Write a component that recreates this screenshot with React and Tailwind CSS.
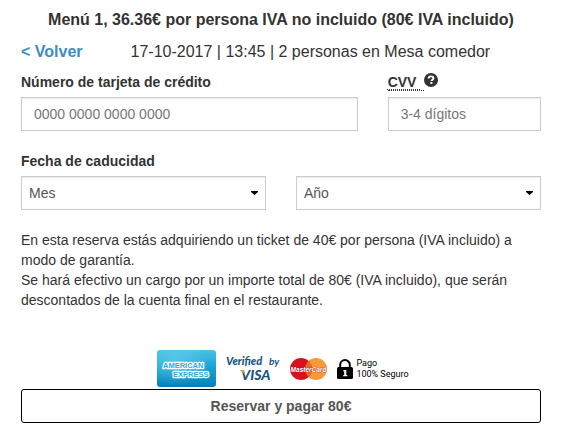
import React from 'react';

const fieldClass =
  'block h-[34px] w-full rounded-none border border-[#cccccc] bg-white text-sm text-[#555555] shadow-[inset_0_1px_1px_rgba(0,0,0,0.075)] outline-none focus:border-[#66afe9]';

function Caret() {
  return (
    <svg
      className="pointer-events-none absolute right-2 top-[15px] h-1 w-[7px]"
      viewBox="0 0 7 4"
      aria-hidden="true"
    >
      <path d="M0 0h7v1L3.5 4L0 1z" fill="#000" />
    </svg>
  );
}

function SelectField({ id, placeholder, options, label }) {
  return (
    <div className="relative">
      <select id={id} aria-label={label} defaultValue="" className={`${fieldClass} appearance-none pl-[7px] pr-6`}>
        <option value="">{placeholder}</option>
        {options.map((option) => (
          <option key={option} value={option}>
            {option}
          </option>
        ))}
      </select>
      <Caret />
    </div>
  );
}

function HelpIcon() {
  return (
    <svg className="h-[14px] w-[14px]" viewBox="0 0 14 14" aria-hidden="true">
      <circle cx="7" cy="7" r="7" fill="#333" />
      <path
        d="M4.6 5.600C4.600 4 5.600 3.400 7.100 3.400s2.300.7 2.300 1.800c0 1.400-1.900 1.500-1.900 2.900"
        fill="none"
        stroke="#fff"
        strokeWidth="1.9"
      />
      <path d="M6.400 9h2v1.900h-2z" fill="#fff" />
    </svg>
  );
}

function AmexLogo() {
  return (
    <svg className="h-[38px] w-[59px]" viewBox="0 0 59 38" role="img" aria-label="American Express">
      <defs>
        <linearGradient id="amex" x1="0" y1="0" x2="0" y2="1">
          <stop offset="0" stopColor="#4cc0e3" />
          <stop offset="0.45" stopColor="#19a5d6" />
          <stop offset="1" stopColor="#0780b9" />
        </linearGradient>
        <radialGradient id="amexGlow" cx="0.3" cy="0.35" r="0.6">
          <stop offset="0" stopColor="#7ee0f2" stopOpacity="0.5" />
          <stop offset="1" stopColor="#7ee0f2" stopOpacity="0" />
        </radialGradient>
      </defs>
      <rect width="59" height="37" rx="3" fill="url(#amex)" />
      <rect width="59" height="37" rx="3" fill="url(#amexGlow)" />
      <g
        fontFamily="'Liberation Sans', Arial, sans-serif"
        fontWeight="700"
        fontSize="7.500"
        fill="#2fa9d6"
        stroke="#fff"
        strokeWidth="2.400"
        strokeLinejoin="round"
        paintOrder="stroke"
      >
        <text x="6" y="17.500">AMERICAN</text>
        <text x="16" y="26.500">EXPRESS</text>
      </g>
    </svg>
  );
}

function VerifiedByVisaLogo() {
  return (
    <svg className="h-[30px] w-[54px]" viewBox="0 0 54 30" role="img" aria-label="Verified by Visa">
      <g fill="#175582" fontStyle="italic" fontWeight="900" fontFamily="Lato, sans-serif">
        <text x="0" y="11" fontSize="11">
          Verified
        </text>
        <text x="43" y="11" fontSize="10" fontWeight="700">
          by
        </text>
        <text x="15" y="26" fontSize="14">
          VISA
        </text>
      </g>
      <path d="M13.500 16h4l2 6c-1.500-3-3-4.500-6-6z" fill="#f39a2d" />
    </svg>
  );
}

function MasterCardLogo() {
  return (
    <svg className="h-[22px] w-[37px]" viewBox="0 0 37 22" role="img" aria-label="MasterCard">
      <circle cx="26" cy="11" r="11" fill="#f8993a" />
      <circle cx="11" cy="11" r="11" fill="#d5121e" />
      <path d="M18.500 3a11 11 0 0 1 0 16a11 11 0 0 1 0-16z" fill="#e76a2a" />
      <text
        x="18.500"
        y="13.500"
        textAnchor="middle"
        fontFamily="'Liberation Sans', Arial, sans-serif"
        fontSize="6.500"
        fontStyle="italic"
        fontWeight="700"
        fill="#fff"
        stroke="#a51626"
        strokeWidth="0.6"
        paintOrder="stroke"
      >
        MasterCard
      </text>
    </svg>
  );
}

function LockIcon() {
  return (
    <svg className="h-[20px] w-4" viewBox="0 0 16 20" aria-hidden="true">
      <path d="M3.200 10V5.700a4.800 4.600 0 0 1 9.600 0V10" fill="none" stroke="#000" strokeWidth="2" />
      <rect y="8" width="16" height="12" rx="1.500" fill="#000" />
      <path d="M6.500 11h2.800v5h1v1.200H6.200V16h1v-3.500h-.9z" fill="#fff" />
    </svg>
  );
}

const months = ['01', '02', '03', '04', '05', '06', '07', '08', '09', '10', '11', '12'];
const years = ['2017', '2018', '2019', '2020', '2021', '2022', '2023', '2024'];

export default function App() {
  return (
    <main className="bg-white pb-6 pl-[21px] pr-[42px] pt-2 font-['Helvetica_Neue','Liberation_Sans',Arial,sans-serif] text-sm leading-5 text-[#333333]">
      <h1 className="text-center text-base font-bold">Menú 1, 36.36€ por persona IVA no incluido (80€ IVA incluido)</h1>

      <div className="mt-2 flex items-center gap-12 text-base">
        <a href="#volver" className="font-bold text-[#3c8dc5]">
          &lt; Volver
        </a>
        <p>17-10-2017 | 13:45 | 2 personas en Mesa comedor</p>
      </div>

      <form onSubmit={(event) => event.preventDefault()}>
        <div className="-mx-[15px] mt-2 flex">
          <div className="w-2/3 px-[15px]">
            <label htmlFor="card" className="mb-[5px] block font-bold">
              Número de tarjeta de crédito
            </label>
            <input
              id="card"
              type="text"
              inputMode="numeric"
              placeholder="0000 0000 0000 0000"
              className={`${fieldClass} px-3 placeholder:text-[#777777]`}
            />
          </div>
          <div className="w-1/3 px-[15px]">
            <div className="mb-[5px] flex h-5 items-center">
              <label htmlFor="cvv" className="font-bold">
                <abbr
                  title="Código de seguridad de la tarjeta"
                  className="block h-[18px] cursor-help whitespace-pre border-b border-dotted border-[#333333] pr-1 leading-[18px] underline decoration-dotted decoration-1 underline-offset-2"
                >
                  {'CVV '}
                </abbr>
              </label>
              <div className="h-[18px]">
                <HelpIcon />
              </div>
            </div>
            <input
              id="cvv"
              type="text"
              inputMode="numeric"
              placeholder="3-4 dígitos"
              className={`${fieldClass} px-3 placeholder:text-[#777777]`}
            />
          </div>
        </div>

        <label htmlFor="month" className="mb-[5px] mt-5 block font-bold">
          Fecha de caducidad
        </label>
        <div className="grid grid-cols-2 gap-[30px]">
          <SelectField id="month" placeholder="Mes" options={months} />
          <SelectField id="year" placeholder="Año" options={years} label="Año de caducidad" />
        </div>

        <div className="mt-5">
          <p>En esta reserva estás adquiriendo un ticket de 40€ por persona (IVA incluido) a modo de garantía.</p>
          <p>
            Se hará efectivo un cargo por un importe total de 80€ (IVA incluido), que serán descontados de la cuenta
            final en el restaurante.
          </p>
        </div>

        <div className="mt-10 flex items-center justify-center gap-[10px] pb-px pl-1">
          <AmexLogo />
          <VerifiedByVisaLogo />
          <MasterCardLogo />
          <div className="flex items-center gap-[3px]">
            <LockIcon />
            <p className="font-[Roboto,sans-serif] text-[9px] leading-[11px] text-black">
              Pago
              <br />
              100% Seguro
            </p>
          </div>
        </div>

        <button
          type="submit"
          className="h-[34px] w-full rounded-[3px] border border-black bg-white font-bold text-[#555555]"
        >
          Reservar y pagar 80€
        </button>
      </form>
    </main>
  );
}
